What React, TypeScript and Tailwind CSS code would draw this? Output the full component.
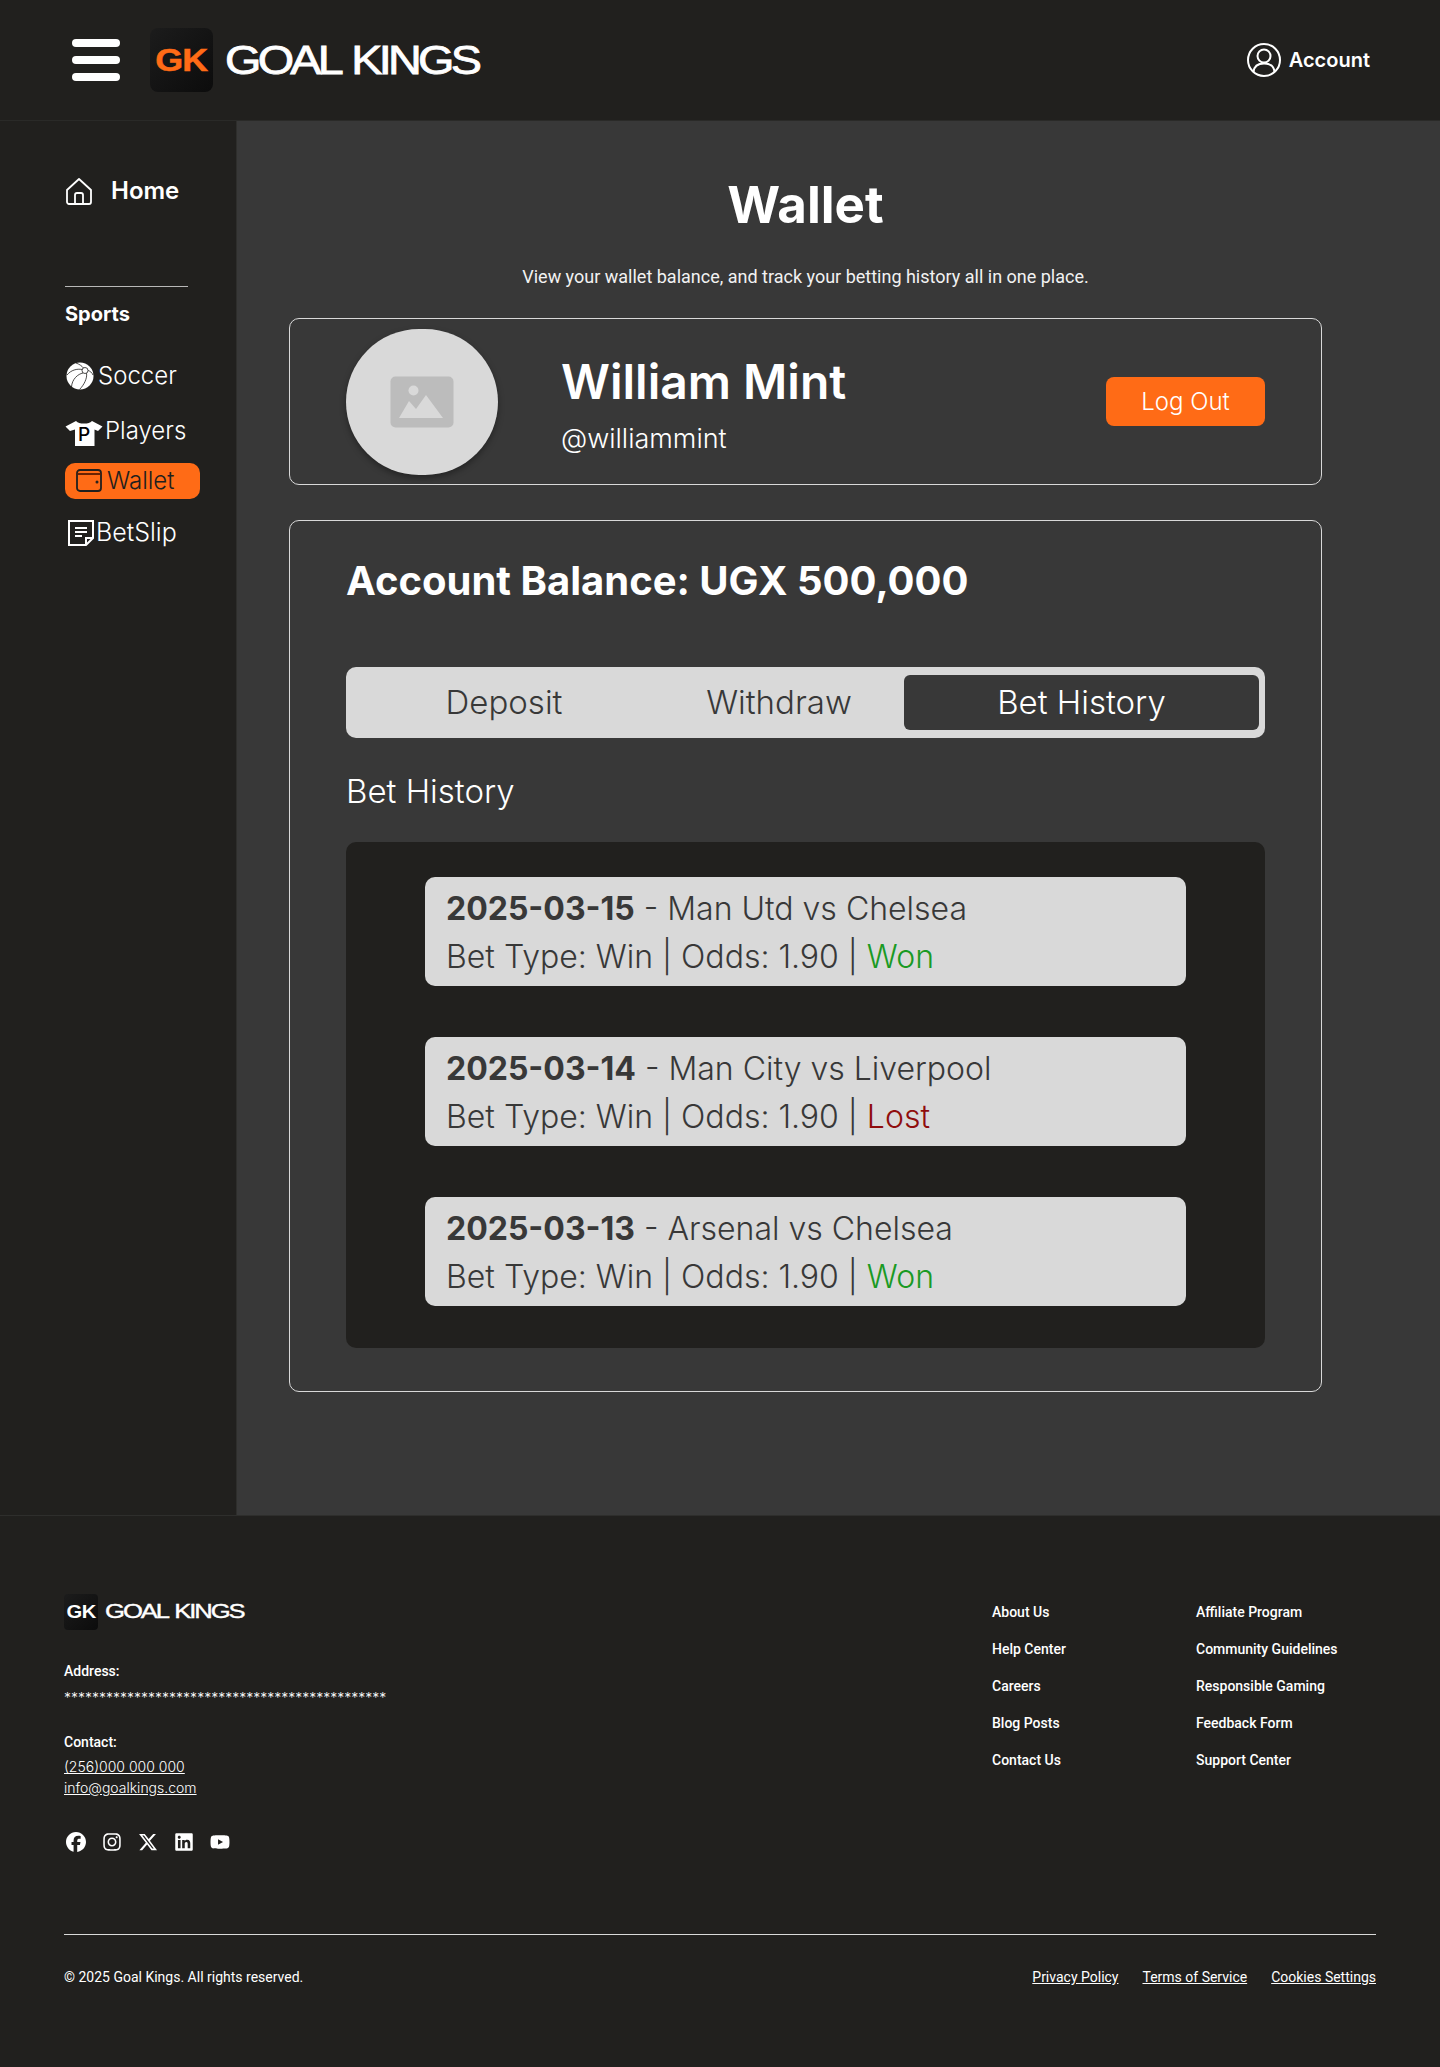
import { FaFacebook, FaInstagram, FaXTwitter, FaLinkedin, FaYoutube } from "react-icons/fa6";

const inter = "font-['Inter',sans-serif]";
const roboto = "font-['Roboto',sans-serif]";

const Wordmark = ({ small }: { small?: boolean }) => (
  <span
    className={
      small
        ? "font-['Liberation_Sans',sans-serif] text-[21px] leading-none tracking-[-0.08em] [word-spacing:0.08em] text-white inline-block origin-left scale-x-[1.22] whitespace-nowrap [-webkit-text-stroke:0.4px_white]"
        : "font-['Liberation_Sans',sans-serif] text-[40px] leading-none tracking-[-0.08em] [word-spacing:0.08em] text-white inline-block origin-left scale-x-[1.17] whitespace-nowrap [-webkit-text-stroke:0.8px_white]"
    }
  >
    GOAL KINGS
  </span>
);

const BeachBall = () => (
  <svg width="28" height="28" viewBox="0 0 28 28" className="shrink-0">
    <circle cx="14" cy="14" r="13.500" fill="#fff" />
    <g fill="none" stroke="#21201e" strokeWidth="0.800">
      <circle cx="19" cy="8.500" r="3" />
      <path d="M16.200 7.500C11 6.500 5 8 1 13" />
      <path d="M17 11C12 12 6 17 5.500 25" />
      <path d="M20.500 11.200C21.500 16 18 23 13.500 27.500" />
      <path d="M17.500 6C16 4 13 2 10 1" />
      <path d="M22 8.500C24 9 26 10.500 27 13" />
    </g>
  </svg>
);

const Shirt = () => (
  <span className="relative inline-block w-[38px] h-[26px] shrink-0">
    <svg width="38" height="26" viewBox="0 0 38 26" className="absolute inset-0">
      <path
        d="M11 1C13 3 15 3.500 19 3.500C23 3.500 25 3 27 1L37.500 6.500L33 11L29.500 9.500V26H10V9.500L5 11L0.500 6.500Z"
        fill="#fff"
      />
    </svg>
    <span className={`${inter} absolute left-[13px] top-[5px] text-[19px] leading-[20px] font-medium text-black`}>P</span>
  </span>
);

const WalletIcon = () => (
  <svg width="26" height="24" viewBox="0 0 26 24" fill="none" stroke="#21201e" strokeWidth="1.800" className="shrink-0">
    <rect x="1" y="1" width="24" height="21" rx="3" />
    <path d="M1 5H25" stroke="#5a1a00" />
    <circle cx="21" cy="13" r="0.600" fill="#21201e" />
  </svg>
);

const NoteIcon = () => (
  <svg width="26" height="26" viewBox="0 0 26 26" fill="none" stroke="#fff" strokeWidth="2" className="shrink-0">
    <path d="M1 1H25V18L18 25H1Z" />
    <path d="M18 25V18H25" />
    <path d="M7 8H19M7 12H19M7 16H14" />
  </svg>
);

const HomeIcon = () => (
  <svg width="26" height="27" viewBox="0 0 26 27" fill="none" stroke="#fff" strokeWidth="1.800" className="shrink-0">
    <path d="M1 12L13 1L25 12V24C25 25 24 26 23 26H3C2 26 1 25 1 24Z" strokeLinejoin="round" />
    <path d="M9 26V17C9 16 10 15 11 15H15C16 15 17 16 17 17V26" />
  </svg>
);

const AccountIcon = () => (
  <svg width="34" height="34" viewBox="0 0 34 34" fill="none" stroke="#fff" strokeWidth="2" className="shrink-0">
    <circle cx="17" cy="17" r="16" />
    <circle cx="17" cy="13" r="6.500" />
    <path d="M6.500 29C7 23.500 11 20.500 17 20.500C23 20.500 27 23.500 27.500 29" />
  </svg>
);

const bets = [
  { date: "2025-03-15", match: "Man Utd vs Chelsea", result: "Won" },
  { date: "2025-03-14", match: "Man City vs Liverpool", result: "Lost" },
  { date: "2025-03-13", match: "Arsenal vs Chelsea", result: "Won" },
];

const linksA = ["About Us", "Help Center", "Careers", "Blog Posts", "Contact Us"];
const linksB = ["Affiliate Program", "Community Guidelines", "Responsible Gaming", "Feedback Form", "Support Center"];

const App = () => {
  return (
    <div className={`${inter} w-[1440px] h-[2067px] bg-[#21201e] text-white flex flex-col overflow-hidden`}>
      <header className="h-[121px] shrink-0 border-b border-[#2a2a28] flex items-center justify-between pl-[72px] pr-[70px]">
        <div className="flex items-center">
          <div className="w-12 flex flex-col gap-[9px]">
            <div className="h-2 rounded-full bg-white"></div>
            <div className="h-2 rounded-full bg-white"></div>
            <div className="h-2 rounded-full bg-white"></div>
          </div>
          <div className="ml-[30px] w-[63px] h-16 rounded-lg bg-gradient-to-br from-[#1c1c1c] to-[#0c0c0c] flex items-center justify-center">
            <span className="font-['Liberation_Sans',sans-serif] text-[32px] font-bold tracking-[-0.02em] text-[#ff6b16] scale-x-[1.12] [-webkit-text-stroke:0.5px_#ff6b16]">GK</span>
          </div>
          <div className="ml-3 w-[260px]">
            <Wordmark />
          </div>
        </div>
        <div className="flex items-center gap-2">
          <AccountIcon />
          <span className="text-xl font-semibold">Account</span>
        </div>
      </header>

      <div className="flex h-[1394px] shrink-0">
        <aside className="w-[237px] shrink-0 pl-[65px] pt-[54px] border-r border-[#2e2e2c]">
          <div className="flex items-center gap-[19px] h-[32px] pl-px">
            <HomeIcon />
            <span className="text-2xl font-semibold">Home</span>
          </div>
          <div className="mt-[79px] w-[123px] h-px bg-[#b8b8b8]"></div>
          <div className="mt-[15px] text-xl font-bold leading-[24px]">Sports</div>
          <div className="mt-[34px] flex items-center gap-1 h-[32px] pl-px font-light text-2xl">
            <BeachBall />
            Soccer
          </div>
          <div className="mt-[25px] flex items-center gap-[2px] h-[32px] font-light text-2xl">
            <Shirt />
            <span className="-mt-1">Players</span>
          </div>
          <div className="mt-[14px] w-[135px] h-9 rounded-[10px] bg-[#ff6b16] flex items-center gap-[5px] pl-[11px] font-light text-2xl text-[#21201e]">
            <WalletIcon />
            Wallet
          </div>
          <div className="mt-[18px] flex items-center gap-[2px] h-[32px] pl-[3px] font-light text-[25px]">
            <NoteIcon />
            BetSlip
          </div>
        </aside>

        <main className="flex-1 bg-[#383838] pl-[52px] pr-[118px] pt-[56px]">
          <h1 className="text-center text-[51px] leading-[56px] font-bold">Wallet</h1>
          <p className={`${roboto} mt-[32px] text-center text-lg leading-6 text-[#f2f2f2]`}>
            View your wallet balance, and track your betting history all in one place.
          </p>
          <section className="mt-[29px] h-[167px] rounded-[10px] border border-[#d9d9d9] flex items-center pl-[56px] pr-[56px]">
            <div className="w-[152px] h-[146px] rounded-full bg-[#d9d9d9] shadow-[0_3px_6px_rgba(0,0,0,0.35)] flex items-center justify-center shrink-0">
              <svg width="64" height="52" viewBox="0 0 64 52">
                <rect x="0.500" y="0.500" width="63" height="51" rx="5" fill="#bcbcbc" />
                <circle cx="23.500" cy="14.500" r="5" fill="#d9d9d9" />
                <path d="M9 42L19 25L26 33L36 19L53 42Z" fill="#d9d9d9" />
              </svg>
            </div>
            <div className="ml-[63px] flex-1 pt-[6px]">
              <div className="text-5xl leading-[58px] font-semibold">William Mint</div>
              <div className="mt-[11px] text-[27px] leading-[34px] font-light">@williammint</div>
            </div>
            <div className="w-[159px] h-[49px] rounded-lg bg-[#ff6b16] flex items-center justify-center text-2xl font-light">Log Out</div>
          </section>

          <section className="mt-[35px] h-[872px] rounded-[10px] border border-[#d9d9d9] pl-[56px] pr-[56px] pt-[36px]">
            <div className="text-[40px] leading-[48px] font-bold">Account Balance: UGX 500,000</div>
            <div className="mt-[62px] h-[71px] rounded-[10px] bg-[#d9d9d9] flex items-center pr-1.5 text-[33px] font-light text-[#383838]">
              <div className="w-[316px] text-center">Deposit</div>
              <div className="w-[234px] text-center">Withdraw</div>
              <div className="ml-2 flex-1 h-[55px] rounded-md bg-[#383838] text-white flex items-center justify-center">Bet History</div>
            </div>
            <div className="mt-[33px] text-[33px] leading-[40px] font-light">Bet History</div>
            <div className="mt-[31px] h-[506px] rounded-[10px] bg-[#21201e] px-[79px] pt-[35px] flex flex-col gap-[51px]">
              {bets.map((bet) => (
                <div key={bet.date} className="h-[109px] rounded-[10px] bg-[#d9d9d9] pl-[21px] pt-2 text-[32px] leading-[48px] font-light text-[#383838]">
                  <div>
                    <span className="font-bold">{bet.date}</span> - {bet.match}
                  </div>
                  <div>
                    Bet Type: Win | Odds: 1.90 |{" "}
                    <span className={bet.result === "Won" ? "text-[#1a9a24]" : "text-[#8f0d0d]"}>{bet.result}</span>
                  </div>
                </div>
              ))}
            </div>
          </section>
        </main>
      </div>

      <footer className={`${roboto} flex-1 border-t border-[#2e2e2c] px-16 pt-[78px] text-[14px]`}>
        <div className="flex justify-between h-[340px]">
          <div>
            <div className="flex items-center">
              <div className="w-[34px] h-[36px] rounded bg-gradient-to-br from-[#1c1c1c] to-[#0c0c0c] flex items-center justify-center">
                <span className="font-['Liberation_Sans',sans-serif] text-[18px] font-bold tracking-[-0.02em] text-white scale-x-[1.12]">GK</span>
              </div>
              <div className="ml-[7px]">
                <Wordmark small />
              </div>
            </div>
            <div className="mt-[31px] font-medium leading-5">Address:</div>
            <div className={`${inter} mt-[7px] leading-5 font-light`}>**********************************************</div>
            <div className="mt-6 font-medium leading-5">Contact:</div>
            <div className={`${inter} mt-1 leading-[21px] font-light underline`}>(256)000 000 000</div>
            <div className={`${inter} leading-[21px] font-light underline`}>info@goalkings.com</div>
            <div className="mt-[34px] flex items-center gap-[16px] pl-0.5 text-[20px]">
              <FaFacebook />
              <FaInstagram />
              <FaXTwitter />
              <FaLinkedin />
              <FaYoutube />
            </div>
          </div>
          <div className="flex pt-2 w-[384px]">
            <div className="w-[204px] flex flex-col gap-[17px] font-medium">
              {linksA.map((l) => (
                <div key={l} className="leading-5">{l}</div>
              ))}
            </div>
            <div className="flex flex-col gap-[17px] font-medium">
              {linksB.map((l) => (
                <div key={l} className="leading-5 whitespace-nowrap">{l}</div>
              ))}
            </div>
          </div>
        </div>
        <div className="h-px bg-[#d9d9d9]"></div>
        <div className="mt-[32px] flex justify-between leading-5">
          <div>© 2025 Goal Kings. All rights reserved.</div>
          <div className="flex gap-6 underline">
            <span>Privacy Policy</span>
            <span>Terms of Service</span>
            <span>Cookies Settings</span>
          </div>
        </div>
      </footer>
    </div>
  );
};

export default App;
